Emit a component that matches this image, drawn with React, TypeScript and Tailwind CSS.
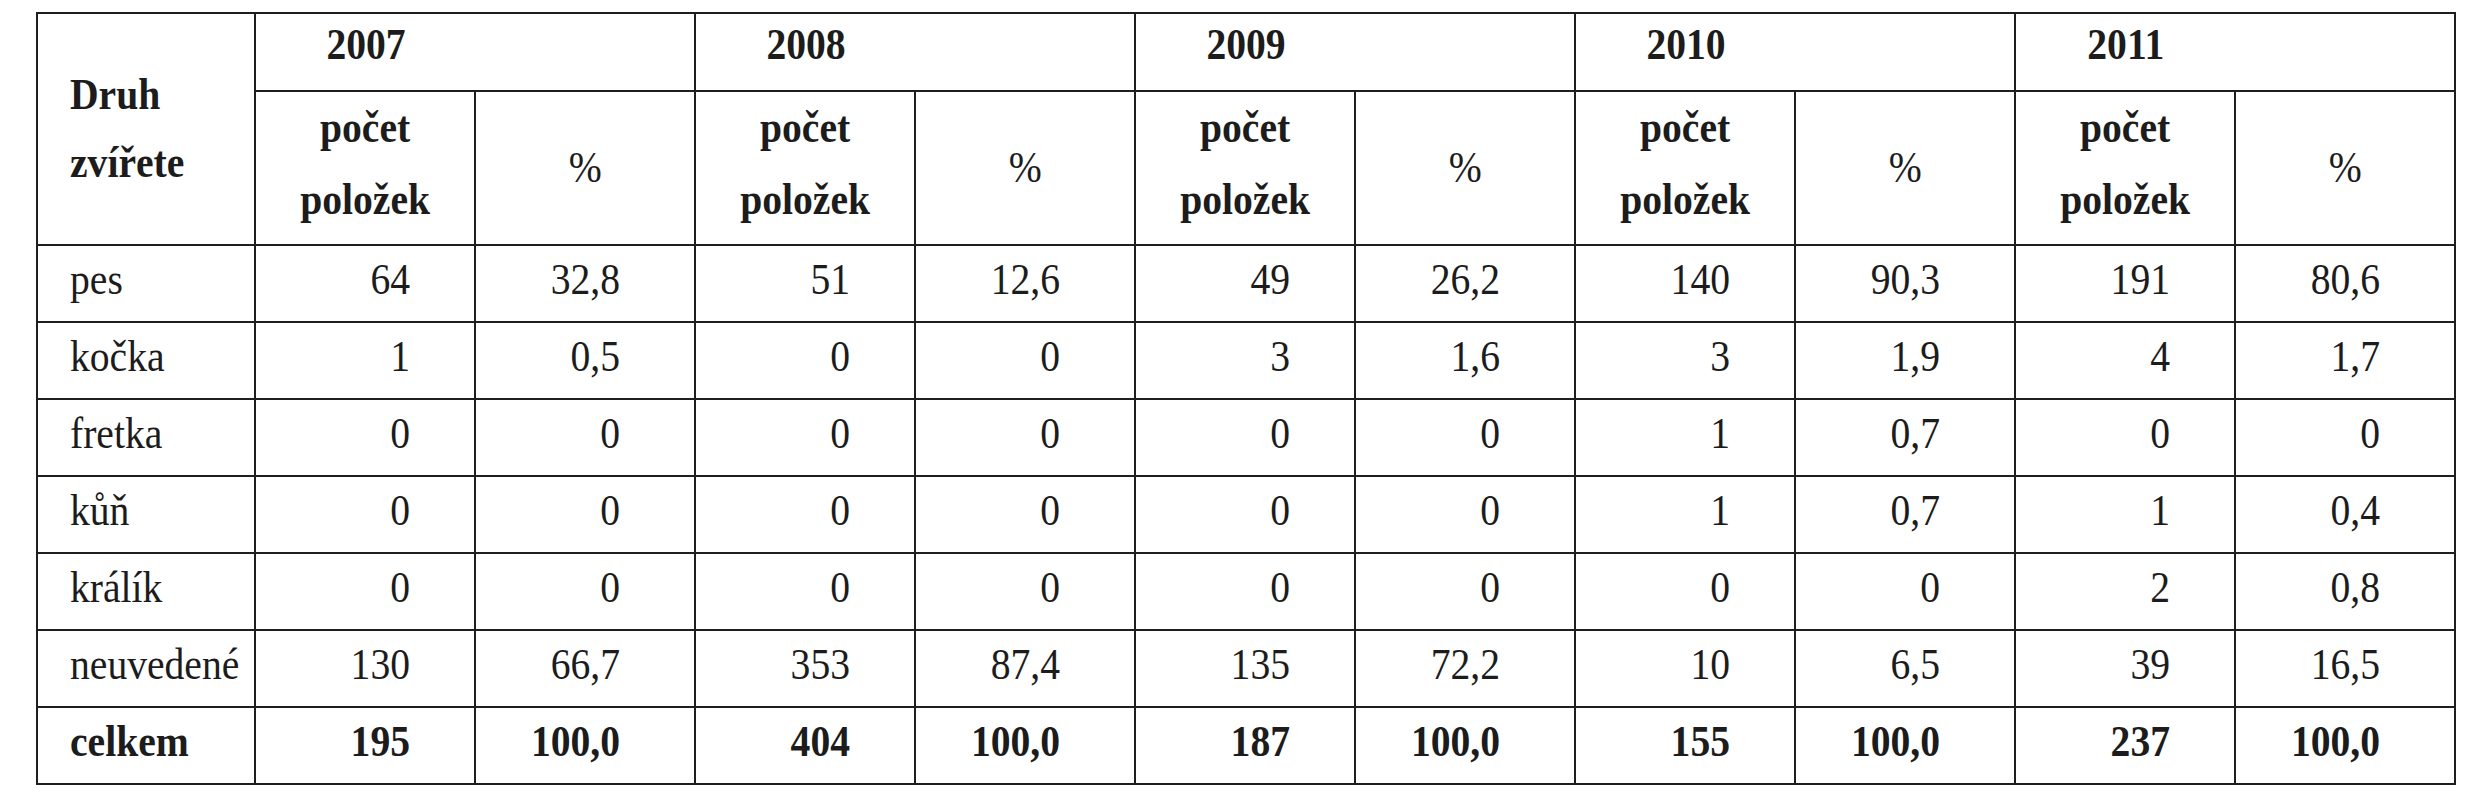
const years = ["2007", "2008", "2009", "2010", "2011"];

type Row = { label: string; values: string[]; total?: boolean };

const rows: Row[] = [
  { label: "pes", values: ["64", "32,8", "51", "12,6", "49", "26,2", "140", "90,3", "191", "80,6"] },
  { label: "kočka", values: ["1", "0,5", "0", "0", "3", "1,6", "3", "1,9", "4", "1,7"] },
  { label: "fretka", values: ["0", "0", "0", "0", "0", "0", "1", "0,7", "0", "0"] },
  { label: "kůň", values: ["0", "0", "0", "0", "0", "0", "1", "0,7", "1", "0,4"] },
  { label: "králík", values: ["0", "0", "0", "0", "0", "0", "0", "0", "2", "0,8"] },
  { label: "neuvedené", values: ["130", "66,7", "353", "87,4", "135", "72,2", "10", "6,5", "39", "16,5"] },
  { label: "celkem", values: ["195", "100,0", "404", "100,0", "187", "100,0", "155", "100,0", "237", "100,0"], total: true },
];

const cell = "border-2 border-[#1e1e1e] p-0";

// text in the scan is a little narrower than plain Times
const Txt = ({ children, origin = "origin-center" }: { children: React.ReactNode; origin?: string }) => (
  <span className={`inline-block scale-x-[0.9] ${origin}`}>{children}</span>
);

export default function App() {
  return (
    <div className="w-[2484px] h-[800px] bg-white pt-[12px] pl-[36px] text-[#1c1c1c] font-['Liberation_Serif',serif]">
      <table className="table-fixed border-collapse w-[2420px] text-[44px]">
        <colgroup>
          <col className="w-[218px]" />
          {Array.from({ length: 10 }).map((_, i) => (
            <col key={i} />
          ))}
        </colgroup>
        <thead>
          <tr className="h-[78px]">
            <th rowSpan={2} className={`${cell} text-left align-middle font-bold`}>
              <div className="pl-[32px] leading-[68px]">
                <div><Txt origin="origin-left">Druh</Txt></div>
                <div><Txt origin="origin-left">zvířete</Txt></div>
              </div>
            </th>
            {years.map((y) => (
              <th key={y} colSpan={2} className={`${cell} align-middle font-bold`}>
                <div className="w-1/2 text-center pb-[14px] leading-[50px]">
                  <Txt>{y}</Txt>
                </div>
              </th>
            ))}
          </tr>
          <tr className="h-[153px]">
            {years.map((y) => [
              <th key={y + "c"} className={`${cell} align-middle text-center font-bold`}>
                <div className="leading-[72px] pb-[8px]">
                  <div><Txt>počet</Txt></div>
                  <div><Txt>položek</Txt></div>
                </div>
              </th>,
              <th key={y + "p"} className={`${cell} align-middle text-center font-normal`}>
                <Txt>%</Txt>
              </th>,
            ])}
          </tr>
        </thead>
        <tbody>
          {rows.map((r) => (
            <tr key={r.label} className={`h-[77px] ${r.total ? "font-bold" : ""}`}>
              <td className={`${cell} text-left pl-[32px] pb-[8px] leading-[50px]`}>
                <Txt origin="origin-left">{r.label}</Txt>
              </td>
              {r.values.map((v, i) => (
                <td
                  key={i}
                  className={`${cell} text-right pb-[8px] leading-[50px] ${i % 2 === 0 ? "pr-[64px]" : "pr-[74px]"}`}
                >
                  <Txt origin="origin-right">{v}</Txt>
                </td>
              ))}
            </tr>
          ))}
        </tbody>
      </table>
    </div>
  );
}
